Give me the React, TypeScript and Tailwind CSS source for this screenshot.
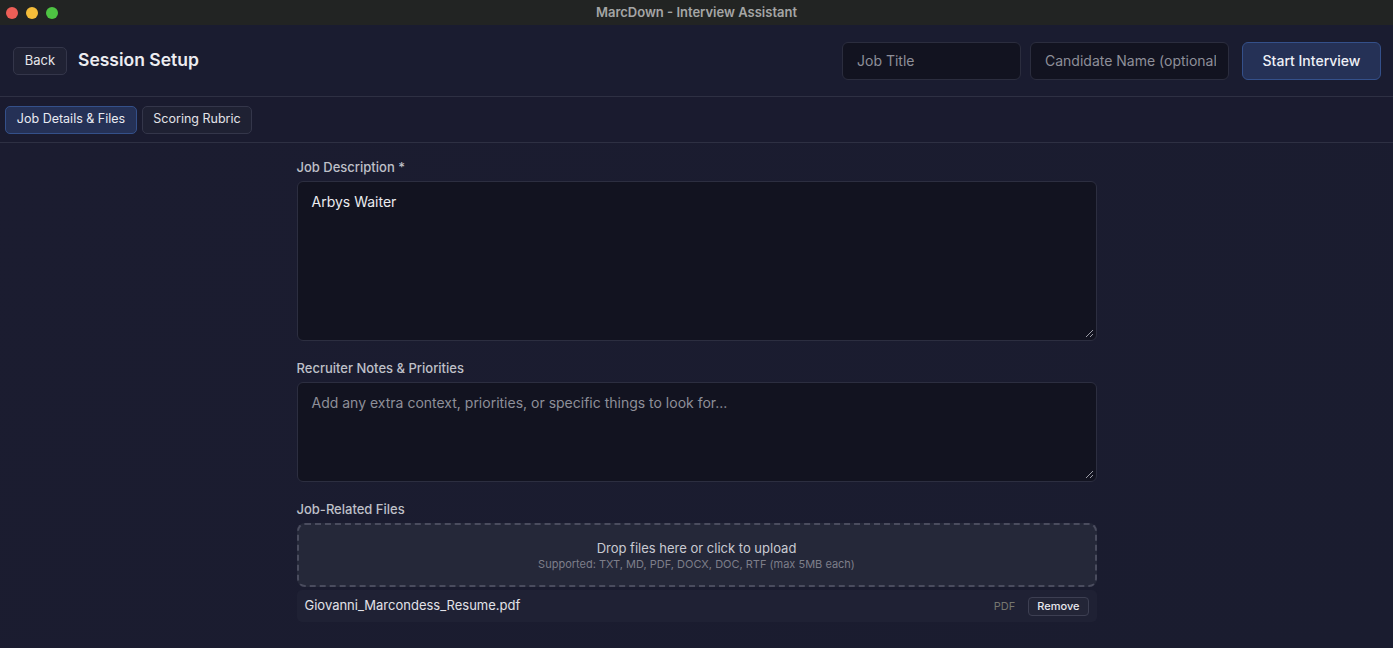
import React from "react";

export default function App() {
  return (
    <div
      className="w-[1393px] h-[648px] overflow-hidden flex flex-col bg-[#1a1b2f] text-[#e5e5ea]"
      style={{ fontFamily: "Inter, 'Noto Sans', sans-serif" }}
    >
      {/* Title bar */}
      <div className="h-[25px] shrink-0 bg-[#222423] flex items-center relative">
        <div className="flex items-center gap-[8px] pl-[6px]">
          <span className="w-[12px] h-[12px] rounded-full bg-[#ed5f57]" />
          <span className="w-[12px] h-[12px] rounded-full bg-[#f4bd3a]" />
          <span className="w-[12px] h-[12px] rounded-full bg-[#4ec443]" />
        </div>
        <div className="absolute inset-0 flex items-center justify-center text-[13px] font-semibold text-[#a5a6a6]">
          MarcDown - Interview Assistant
        </div>
      </div>

      {/* Header */}
      <div className="h-[72px] shrink-0 flex items-center justify-between pl-[13px] pr-[12px] border-b border-[#2e3043] bg-[#1a1c30]">
        <div className="flex items-center gap-[11px]">
          <button className="h-[28px] w-[54px] rounded-[5px] border border-[#34364a] bg-[#202234] text-[13px] text-[#e6e6ea]">
            Back
          </button>
          <h1 className="text-[17.5px] font-semibold text-[#ececf0]">Session Setup</h1>
        </div>
        <div className="flex items-center">
          <div className="w-[179px] h-[38px] rounded-[6px] border border-[#2b2d3e] bg-[#121320] flex items-center px-[14px] text-[14px] text-[#8e8f99]">
            Job Title
          </div>
          <div className="ml-[9px] w-[199px] h-[38px] rounded-[6px] border border-[#2b2d3e] bg-[#121320] flex items-center pl-[14px] pr-[12px] text-[14px] text-[#8e8f99] overflow-hidden whitespace-nowrap">
            <span className="overflow-hidden">Candidate Name (optional)</span>
          </div>
          <button className="ml-[13px] w-[139px] h-[38px] rounded-[6px] border border-[#34508a] bg-[#253156] text-[14px] font-medium text-[#eef0f6]">
            Start Interview
          </button>
        </div>
      </div>

      {/* Tabs */}
      <div className="h-[46px] shrink-0 flex items-center gap-[5px] pl-[5px] border-b border-[#2e3043]">
        <button className="h-[28px] w-[132px] rounded-[5px] border border-[#34508a] bg-[#253156] text-[12.5px] text-[#e8eaf2]">
          Job Details &amp; Files
        </button>
        <button className="h-[28px] w-[110px] rounded-[5px] border border-[#34364a] bg-[#1f2133] text-[12.5px] text-[#e2e2e8]">
          Scoring Rubric
        </button>
      </div>

      {/* Content */}
      <div className="flex-1 bg-[linear-gradient(135deg,#1b1c30,#1a1c2f)]">
        <div className="w-[800px] mx-auto pt-[16px] flex flex-col">
          <label className="text-[13px] font-medium text-[#bfc0c8] leading-[16px]">Job Description *</label>
          <div className="mt-[6px] h-[160px] rounded-[6px] border border-[#2c2e40] bg-[#121320] px-[14px] pt-[9px] text-[14px] text-[#ececf0] relative">
            Arbys Waiter
            <Grip />
          </div>

          <label className="mt-[19px] text-[13px] font-medium text-[#bfc0c8] leading-[16px]">
            Recruiter Notes &amp; Priorities
          </label>
          <div className="mt-[6px] h-[100px] rounded-[6px] border border-[#2c2e40] bg-[#121320] px-[14px] pt-[9px] text-[14px] text-[#8e8f99] relative">
            Add any extra context, priorities, or specific things to look for...
            <Grip />
          </div>

          <label className="mt-[19px] text-[13px] font-medium text-[#bfc0c8] leading-[16px]">Job-Related Files</label>
          <div className="mt-[6px] h-[64px] rounded-[8px] border-2 border-dashed border-[#4a4c5e] bg-[#252839] flex flex-col items-center justify-center">
            <div className="text-[13px] text-[#c9cad2] leading-[16px]">Drop files here or click to upload</div>
            <div className="text-[11px] text-[#7d7e8a] leading-[14px] mt-[1px]">
              Supported: TXT, MD, PDF, DOCX, DOC, RTF (max 5MB each)
            </div>
          </div>
          <div className="mt-[3px] h-[32px] rounded-[5px] bg-[#1f2134] flex items-center justify-between pl-[8px] pr-[8px]">
            <span className="text-[13px] text-[#e2e2e8]">Giovanni_Marcondess_Resume.pdf</span>
            <div className="flex items-center gap-[13px]">
              <span className="text-[11px] text-[#75766f]">PDF</span>
              <button className="h-[19px] px-[8px] rounded-[4px] border border-[#3d3f52] bg-[#232537] text-[11px] font-medium text-[#e8e8ee]">
                Remove
              </button>
            </div>
          </div>
        </div>
      </div>
    </div>
  );
}

function Grip() {
  return (
    <svg className="absolute right-[2px] bottom-[2px]" width="9" height="9" viewBox="0 0 9 9">
      <line x1="1" y1="8" x2="8" y2="1" stroke="#9a9ba5" strokeWidth="1" />
      <line x1="5" y1="8" x2="8" y2="5" stroke="#9a9ba5" strokeWidth="1" />
    </svg>
  );
}
